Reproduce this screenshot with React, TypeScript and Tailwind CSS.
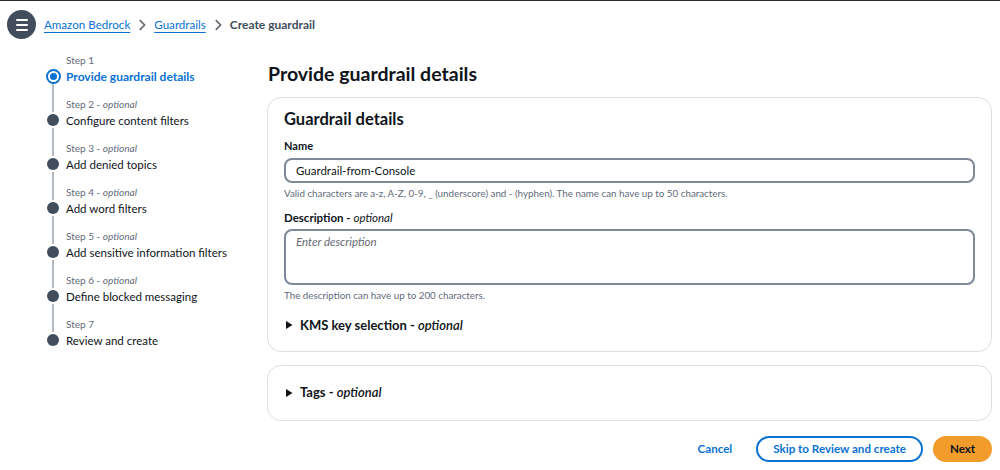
import { Fragment } from "react";

const steps = [
  { label: "Step 1", title: "Provide guardrail details", optional: false },
  { label: "Step 2", title: "Configure content filters", optional: true },
  { label: "Step 3", title: "Add denied topics", optional: true },
  { label: "Step 4", title: "Add word filters", optional: true },
  { label: "Step 5", title: "Add sensitive information filters", optional: true },
  { label: "Step 6", title: "Define blocked messaging", optional: true },
  { label: "Step 7", title: "Review and create", optional: false },
];

function Caret() {
  return (
    <svg width="10" height="10" viewBox="0 0 10 10" className="shrink-0">
      <path d="M2 1 L8.5 5 L2 9 Z" fill="#0f141a" />
    </svg>
  );
}

function Chevron() {
  return (
    <svg width="14" height="14" viewBox="0 0 16 16" className="mx-[5px]">
      <path d="M5.5 2.5 L11 8 L5.5 13.5" fill="none" stroke="#656871" strokeWidth="2" strokeLinejoin="round" />
    </svg>
  );
}

export default function App() {
  return (
    <div
      className="w-[1000px] h-[470px] bg-white border-t border-[#2a2a2a] text-[#0f141a] overflow-hidden"
      style={{ fontFamily: 'Lato, "Open Sans", sans-serif' }}
    >
      {/* Breadcrumbs */}
      <div className="flex items-center h-[47px] pl-[7px]">
        <div className="w-[29px] h-[29px] rounded-full bg-[#414d5c] flex flex-col items-center justify-center gap-[3px]">
          <span className="block w-[12px] h-[2px] bg-white rounded" />
          <span className="block w-[12px] h-[2px] bg-white rounded" />
          <span className="block w-[12px] h-[2px] bg-white rounded" />
        </div>
        <nav className="flex items-center ml-[8px] text-[11.6px]">
          <a className="text-[#0972d3] underline underline-offset-[3px] decoration-[#0972d3]">Amazon Bedrock</a>
          <Chevron />
          <a className="text-[#0972d3] underline underline-offset-[3px]">Guardrails</a>
          <Chevron />
          <span className="font-bold text-[12px] text-[#414d5c]">Create guardrail</span>
        </nav>
      </div>

      <div className="flex pl-[46px] pr-[8px]">
        {/* Wizard steps */}
        <ol className="w-[221px] shrink-0 pt-[4px]">
          {steps.map((s, i) => (
            <li key={s.label} className="flex">
              <div className="w-[14px] flex flex-col items-center shrink-0">
                <div className={`w-[2px] h-[16px] ${i === 0 ? "" : "bg-[#b4bbc5]"}`} />
                <div className="h-[16px] flex items-center justify-center">
                  {i === 0 ? (
                    <span className="w-[15px] h-[15px] rounded-full border-2 border-[#0972d3] flex items-center justify-center">
                      <span className="w-[7px] h-[7px] rounded-full bg-[#0972d3]" />
                    </span>
                  ) : (
                    <span className="w-[12px] h-[12px] rounded-full bg-[#414d5c]" />
                  )}
                </div>
                <div className={`w-[2px] flex-1 ${i === steps.length - 1 ? "" : "bg-[#b4bbc5]"}`} />
              </div>
              <div className="pl-[6px] pb-[11px]">
                <div className="text-[10px] leading-[16px] text-[#5f6b7a]">
                  {s.label}
                  {s.optional && (
                    <Fragment>
                      {" - "}
                      <i>optional</i>
                    </Fragment>
                  )}
                </div>
                <div
                  className={`leading-[17px] ${
                    i === 0 ? "text-[12px] font-bold text-[#0972d3]" : "text-[11.5px] text-[#0f141a]"
                  }`}
                >
                  {s.title}
                </div>
              </div>
            </li>
          ))}
        </ol>

        {/* Main */}
        <main className="flex-1">
          <h1 className="text-[19.5px] font-bold leading-[24px] mt-[14px] mb-[11px] pl-[1px]">
            Provide guardrail details
          </h1>

          <section className="rounded-[14px] border border-[#dcdee2] px-[16px] pt-[10px] pb-[16px]">
            <h2 className="text-[16.5px] font-bold leading-[22px] mb-[8px]">Guardrail details</h2>

            <label className="block text-[11px] font-bold leading-[16px] mb-[4px]">Name</label>
            <div className="h-[25px] rounded-[8px] border-2 border-[#7d8998] flex items-center px-[10px] text-[11.5px]">
              Guardrail-from-Console
            </div>
            <p className="text-[9.8px] leading-[14px] text-[#5f6b7a] mt-[3px]">
              Valid characters are a-z, A-Z, 0-9, _ (underscore) and - (hyphen). The name can have up to 50
              characters.
            </p>

            <label className="block text-[11.5px] font-bold leading-[16px] mt-[10px] mb-[3px]">
              Description - <i className="font-normal">optional</i>
            </label>
            <div className="h-[56px] rounded-[8px] border-2 border-[#7d8998] px-[10px] pt-[2px] text-[11.5px] italic text-[#656871]">
              Enter description
            </div>
            <p className="text-[9.8px] leading-[14px] text-[#5f6b7a] mt-[3px]">
              The description can have up to 200 characters.
            </p>

            <div className="flex items-center gap-[6px] mt-[13px] text-[13px] font-bold leading-[20px]">
              <Caret />
              <span>
                KMS key selection - <i className="font-semibold">optional</i>
              </span>
            </div>
          </section>

          <section className="rounded-[14px] border border-[#dcdee2] h-[56px] mt-[13px] px-[16px] flex items-center">
            <div className="flex items-center gap-[6px] text-[13px] font-bold">
              <Caret />
              <span>
                Tags - <i className="font-semibold">optional</i>
              </span>
            </div>
          </section>

          <div className="flex items-center justify-end mt-[15px] text-[11.6px] font-bold">
            <button className="text-[#0972d3] px-[16px] h-[26px]">Cancel</button>
            <button className="ml-[8px] h-[26px] px-[15px] rounded-full border-2 border-[#0972d3] text-[#0972d3]">
              Skip to Review and create
            </button>
            <button className="ml-[10px] h-[26px] w-[59px] rounded-full bg-[#f29c2b] border-2 border-[#f29c2b] text-[#0f141a]">
              Next
            </button>
          </div>
        </main>
      </div>
    </div>
  );
}
